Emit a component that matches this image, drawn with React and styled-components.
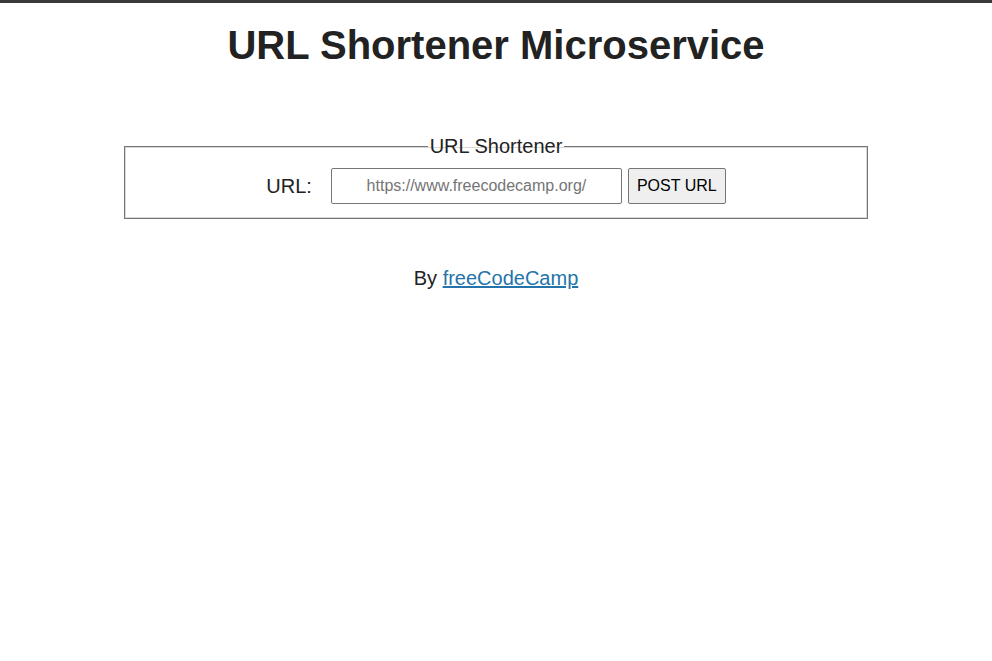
import React from 'react'
import styled, { createGlobalStyle } from 'styled-components'

const GlobalStyle = createGlobalStyle`
  body {
    margin: 0;
    border-top: 3px solid #3a3a3a;
    font-family: "Liberation Sans", Arial, sans-serif;
    color: #222;
    background: #fff;
  }
`

const Title = styled.h1`
  margin: 18px 0 0;
  text-align: center;
  font-size: 40px;
  line-height: 48px;
  font-weight: bold;
  color: #222;
`

const Form = styled.form`
  margin: 66px auto 0;
  width: 75%;
`

const Fieldset = styled.fieldset`
  margin: 0;
  padding: 11px 12px 14px;
  border: 1px solid #767676;
  box-shadow: inset 0 0 0 1px #d8d8d8;
`

const Legend = styled.legend`
  margin: 0 auto;
  padding: 0 2px;
  font-size: 20px;
  line-height: 22px;
`

const Row = styled.div`
  display: flex;
  justify-content: center;
  align-items: center;
  gap: 6px;
`

const Label = styled.label`
  font-size: 20px;
  margin-right: 13px;
`

const Input = styled.input`
  box-sizing: border-box;
  width: 291px;
  height: 36px;
  padding: 0 8px;
  border: 1px solid #767676;
  border-radius: 2px;
  font-family: "Liberation Sans", Arial, sans-serif;
  font-size: 16px;
  text-align: center;
  &::placeholder {
    color: #757575;
  }
`

const Button = styled.button`
  box-sizing: border-box;
  height: 36px;
  padding: 0 8px;
  border: 1px solid #767676;
  border-radius: 2px;
  background: #efefef;
  font-family: "Liberation Sans", Arial, sans-serif;
  font-size: 16px;
  color: #000;
`

const Footer = styled.p`
  margin: 48px 0 0;
  text-align: center;
  font-size: 20px;
`

const Link = styled.a`
  color: #2574a9;
`

export default function App() {
  return (
    <>
      <GlobalStyle />
      <Title>URL Shortener Microservice</Title>
      <Form onSubmit={e => e.preventDefault()}>
        <Fieldset>
          <Legend>URL Shortener</Legend>
          <Row>
            <Label htmlFor="url_input">URL:</Label>
            <Input id="url_input" type="text" name="url" placeholder="https://www.freecodecamp.org/" />
            <Button type="submit">POST URL</Button>
          </Row>
        </Fieldset>
      </Form>
      <Footer>
        By <Link href="#">freeCodeCamp</Link>
      </Footer>
    </>
  )
}
